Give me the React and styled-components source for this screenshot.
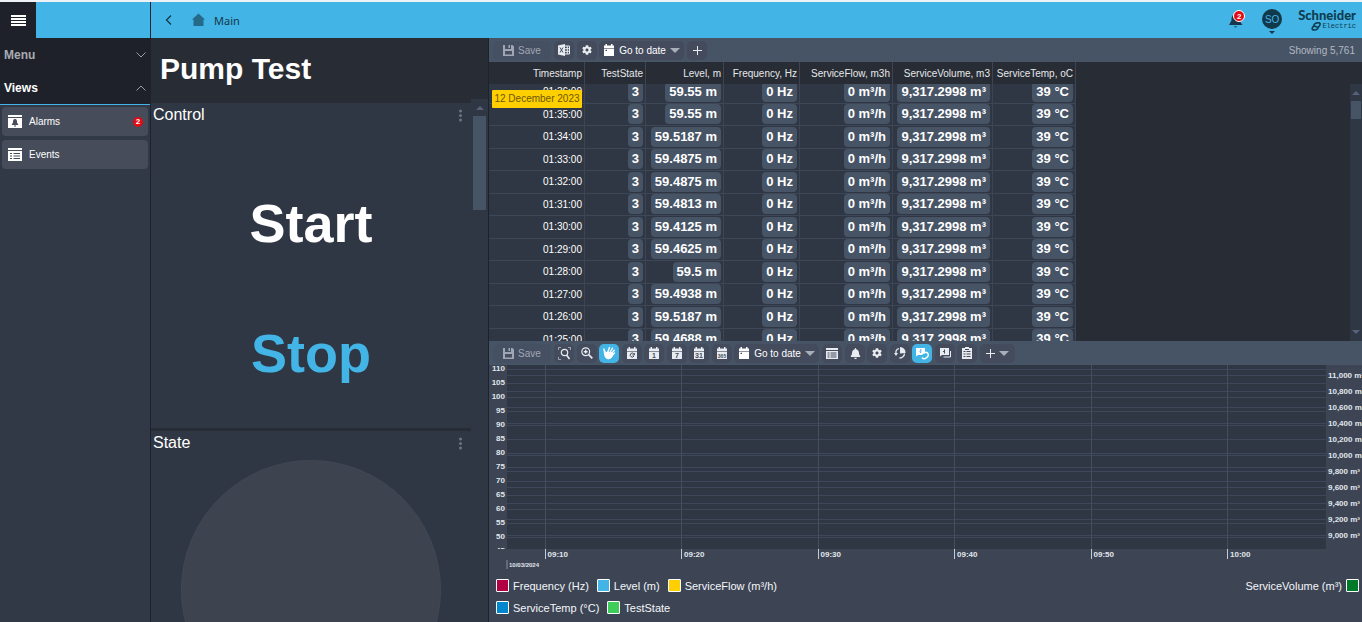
import {useLayoutEffect, useRef} from 'react'
import styled, {createGlobalStyle, css} from 'styled-components'
import {FaBell, FaCog} from 'react-icons/fa'

const GlobalStyle = createGlobalStyle`
  * {
    box-sizing: border-box;
  }

  body {
    margin: 0;
    background: #282c34;
    font-family: 'Liberation Sans', Arial, sans-serif;
    font-size: 10px;
    color: #ffffff;
  }

  button {
    border: 0;
    padding: 0;
    margin: 0;
    background: none;
    color: inherit;
    font: inherit;
    cursor: pointer;
  }

  svg {
    display: block;
    flex: none;
  }
`

// page frame

const Page = styled.div`
  display: grid;
  grid-template-columns: 151px 338px minmax(0, 1fr);
  grid-template-rows: 36px minmax(0, 1fr);
  height: 100vh;
  overflow: hidden;
  border-top: 2px solid #eef2f7;
`

const SideHeader = styled.div`
  background: #42b4e6;
  border-right: 1px solid #1e2530;
`

const MenuButton = styled.button`
  display: flex;
  align-items: center;
  justify-content: center;
  width: 36px;
  height: 36px;
  background: #1e2129;
`

const TopBar = styled.header`
  grid-column: 2 / 4;
  display: flex;
  align-items: center;
  justify-content: space-between;
  padding: 0 6px 0 12px;
  background: #42b4e6;
  color: #16384a;
`

const TopBarGroup = styled.div`
  display: flex;
  align-items: center;
  gap: ${props => props.$gap}px;
`

const HomeLink = styled.a`
  display: flex;
  align-items: center;
  gap: 8px;
  color: inherit;
  font: 11px 'Noto Sans', sans-serif;
  text-decoration: none;
`

const AlertButton = styled.button`
  position: relative;
  width: 20px;
  height: 20px;
`

const Badge = styled.span`
  display: flex;
  align-items: center;
  justify-content: center;
  width: 10px;
  height: 10px;
  border-radius: 50%;
  background: #e00b14;
  color: #ffffff;
  font-size: 8px;
  font-weight: bold;
`

const AlertBadge = styled(Badge)`
  position: absolute;
  top: 0;
  right: 1px;
  width: 12px;
  height: 12px;
  border: 1px solid #ffffff;
`

const UserButton = styled.button`
  display: flex;
  flex-direction: column;
  align-items: center;
  gap: 2px;
  padding-top: 3px;
`

const Avatar = styled.span`
  display: flex;
  align-items: center;
  justify-content: center;
  width: 20px;
  height: 20px;
  border-radius: 50%;
  background: #12394b;
  color: #42b4e6;
`

const Logo = styled.div`
  display: flex;
  flex-direction: column;
  align-items: flex-end;
  color: #0f3d50;
`

const LogoName = styled.span`
  font: 900 13px/13px Lato, sans-serif;
`

const LogoSub = styled.span`
  display: flex;
  gap: 1px;
  font: 7px/8px 'Liberation Mono', monospace;
`

// sidebar

const Sidebar = styled.nav`
  min-height: 0;
  background: #323946;
  border-right: 1px solid #1e222a;
`

const SectionList = styled.div`
  background: #1e2129;
  border-bottom: 1px solid #42b4e6;
`

const SectionButton = styled.button`
  display: flex;
  align-items: center;
  justify-content: space-between;
  width: 100%;
  height: 33px;
  padding: 0 4px;
  color: ${props => (props.$open ? '#ffffff' : '#a9acb2')};
  font-size: 12px;
  font-weight: bold;
`

const ViewList = styled.div`
  display: flex;
  flex-direction: column;
  gap: 4px;
  padding: 2px 2px 0;
`

const ViewButton = styled.button`
  display: flex;
  align-items: center;
  gap: 7px;
  height: 29px;
  padding: 0 5px 0 6px;
  border-radius: 4px;
  background: #464c59;

  ${Badge} {
    margin-left: auto;
  }
`

// pump column

const PumpColumn = styled.main`
  display: flex;
  flex-direction: column;
  min-height: 0;
  background: #303744;
  border-right: 1px solid #1e222a;
`

const PumpTitle = styled.h1`
  margin: 0;
  padding: 0 9px;
  background: #282c34;
  font-size: 30px;
  line-height: 61px;
`

const PumpScroll = styled.div`
  flex: 1;
  display: flex;
  min-height: 0;
`

const PumpPanels = styled.div`
  flex: 1;
  min-width: 0;
  overflow: hidden;
  border-top: 4px solid #282c34;
`

const Panel = styled.section`
  border-bottom: 3px solid #282c34;
`

const PanelHead = styled.div`
  display: flex;
  align-items: center;
  justify-content: space-between;
  height: 24px;
  padding: 0 8px 0 2px;
`

const PanelTitle = styled.h2`
  margin: 0;
  font-size: 16px;
  font-weight: normal;
`

const CommandButton = styled.button`
  display: block;
  width: 100%;
  height: 130px;
  color: ${props => props.$color};
  font-size: 54px;
  font-weight: bold;
`

const CommandList = styled.div`
  padding: 31px 0 10px;
`

const StateLamp = styled.div`
  width: 260px;
  height: 260px;
  margin: 5px auto 0;
  border: 1px solid #414855;
  border-radius: 50%;
  background: #3d434f;
`

const ScrollTrack = styled.div`
  display: flex;
  flex-direction: column;
  align-items: center;
  justify-content: space-between;
  flex: none;
  width: ${props => props.$width}px;
  padding: 7px 0;
  background: #303744;
`

const ScrollThumb = styled.div`
  width: ${props => props.$width}px;
  height: ${props => props.$height}px;
  margin: 6px 0 auto;
  background: #475466;
`

// data column

const DataColumn = styled.div`
  display: flex;
  flex-direction: column;
  min-height: 0;
  min-width: 0;
`

const Toolbar = styled.div`
  display: flex;
  align-items: center;
  gap: 3px;
  height: 24px;
  flex: none;
  padding: 0 7px 0 4px;
  background: #475466;
`

const ToolGroup = styled.div`
  display: flex;
  gap: 2px;
`

const ToolButton = styled.button`
  display: flex;
  align-items: center;
  justify-content: center;
  gap: 4px;
  width: ${props => props.$width || 20}px;
  height: 19px;
  border-radius: 5px;
  background: ${props => (props.$active ? '#42b4e6' : '#434b5c')};
  color: #e8ebf0;

  ${props =>
    props.$wide &&
    css`
      color: #ffffff;
    `}

  &:disabled {
    background: #465063;
    color: #a0a7b3;
    cursor: default;
  }
`

const RecordCount = styled.span`
  margin-left: auto;
  color: #b3b8c1;
`

const TablePane = styled.div`
  position: relative;
  flex: 1;
  display: flex;
  min-height: 0;
`

const TableScroll = styled.div`
  flex: 1;
  min-width: 0;
  overflow: auto;
  scrollbar-width: none;
`

const ScrollColumn = styled.div`
  display: flex;
  padding-top: 22px;
`

const Table = styled.table`
  table-layout: fixed;
  width: 587px;
  height: 292px;
  border-spacing: 0;
`

const HeadCell = styled.th`
  position: sticky;
  top: 0;
  width: ${props => props.$width}px;
  height: 22px;
  padding: 0 2px 0 0;
  border-right: 1px solid #3d4555;
  background: #282c34;
  color: #e6e8eb;
  font-weight: normal;
  text-align: right;
  white-space: nowrap;
`

const Cell = styled.td`
  padding: 0 2px 0 0;
  border-right: 1px solid #3d4555;
  border-bottom: 1px solid #3d4758;
  background: #303744;
  text-align: right;
  white-space: nowrap;
`

const Value = styled.span`
  display: block;
  width: fit-content;
  margin-left: auto;
  padding: 0 4px;
  border-radius: 4px;
  background: #475466;
  font-size: 13px;
  font-weight: bold;
  line-height: 20px;
`

// sits over the first visible rows
const DateTag = styled.div`
  position: absolute;
  top: 28px;
  left: 3px;
  width: 90px;
  border-radius: 1px;
  background: #ffcf00;
  color: #6b5700;
  line-height: 18px;
  text-align: center;
`

// chart

const ChartPane = styled.section`
  flex: none;
  background: #3d4555;
`

const ChartBody = styled.div`
  display: grid;
  grid-template-columns: 18px minmax(0, 1fr) 36px;
  height: 208px;
`

const Axis = styled.div`
  height: 184px;
  padding: ${props => props.$top}px 2px 0;
  overflow: hidden;
  color: #e1e5eb;
  font-size: 8px;
  font-weight: bold;
  line-height: ${props => props.$step}px;
  text-align: ${props => props.$align};
  white-space: nowrap;
`

const AxisLabel = styled.div`
  &:first-child {
    margin-top: ${props => props.$shift || 0}px;
  }
`

const Plot = styled.svg`
  width: 100%;
  height: 208px;
  overflow: visible;
  font-size: 8px;
  font-weight: bold;
`

const Legend = styled.div`
  display: flex;
  justify-content: space-between;
  align-items: flex-start;
  padding: 6px 3px 8px 7px;
`

const LegendSide = styled.div`
  display: flex;
  flex-wrap: wrap;
  gap: 9px 8px;
  width: 40%;
  justify-content: ${props => props.$align || 'flex-start'};
`

const LegendItem = styled.div`
  display: flex;
  align-items: center;
  gap: 4px;
  height: 13px;
  font-size: 11px;
  color: #f4f6f9;
`

const Swatch = styled.span`
  width: 13px;
  height: 13px;
  border: 1px solid #ffffff;
  border-radius: 1px;
  background: ${props => props.$color};
`

const columns = [
  {name: 'Timestamp', width: 96},
  {name: 'TestState', width: 61},
  {name: 'Level, m', width: 78},
  {name: 'Frequency, Hz', width: 76},
  {name: 'ServiceFlow, m3h', width: 93},
  {name: 'ServiceVolume, m3', width: 100},
  {name: 'ServiceTemp, oC', width: 83},
]

const readings = [
  ['01:36:00', '59.55 m'],
  ['01:35:00', '59.55 m'],
  ['01:34:00', '59.5187 m'],
  ['01:33:00', '59.4875 m'],
  ['01:32:00', '59.4875 m'],
  ['01:31:00', '59.4813 m'],
  ['01:30:00', '59.4125 m'],
  ['01:29:00', '59.4625 m'],
  ['01:28:00', '59.5 m'],
  ['01:27:00', '59.4938 m'],
  ['01:26:00', '59.5187 m'],
  ['01:25:00', '59.4688 m'],
]

const leftTicks = [110, 105, 100, 95, 90, 85, 80, 75, 70, 65, 60, 55, 50, 45]
const rightTicks = [11000, 10800, 10600, 10400, 10200, 10000, 9800, 9600, 9400, 9200, 9000]
const times = ['09:10', '09:20', '09:30', '09:40', '09:50', '10:00']

// icons

const Arrow = ({down, size = 8, color = '#56637a'}) => (
  <svg width={size} height={size / 2} viewBox="0 0 8 4">
    <path d={down ? 'M0 0h8L4 4z' : 'M0 4h8L4 0z'} fill={color} />
  </svg>
)

const Chevron = ({up}) => (
  <svg width="10" height="6" viewBox="0 0 10 6" fill="none" stroke="#9a9da4">
    <path d={up ? 'M.5 5.5L5 1l4.500 4.500' : 'M.5.5L5 5 9.500.5'} />
  </svg>
)

const SaveIcon = () => (
  <svg width="11" height="11" viewBox="0 0 11 11" fill="currentColor">
    <path fillRule="evenodd" d="M0 0h2v4h6V0h1.500L11 1.500V11H0zM2 6v3.500h7V6zM5.500 0H7v3H5.500z" />
  </svg>
)

const ExcelIcon = () => (
  <svg width="12" height="12" viewBox="0 0 12 12" fill="none" stroke="currentColor">
    <path d="M0 1.500L7 0v12L0 10.500z" fill="currentColor" stroke="none" />
    <path d="M2 3.500l3 5M5 3.500l-3 5" stroke="#434b5c" />
    <path d="M7 2h4.500v8H7M7 4.700h4.500M7 7.300h4.500M9.300 2v8" />
  </svg>
)

const CalendarIcon = ({label, refresh}) => (
  <svg width="12" height="12" viewBox="0 0 12 12">
    <path d="M1 4V1.500h1.500V0H4v1.500h4V0h1.500v1.500H11V4z" fill="currentColor" />
    <path d="M1 4.600h10V12H1z" fill="currentColor" />
    {label && (
      <text x="6" y="10.500" textAnchor="middle" fontSize={label.length > 2 ? 5 : 7} fontWeight="bold" fill="#434b5c">
        {label}
      </text>
    )}
    {refresh && <path d="M7.800 6.800A2 2 0 1 0 8 9M8.300 6v2H6.300" fill="none" stroke="#434b5c" />}
    {!label && !refresh && <path d="M2.500 5.800H4v1.300H2.500z" fill="#434b5c" />}
  </svg>
)

const PlusIcon = () => (
  <svg width="9" height="9" viewBox="0 0 9 9" stroke="currentColor">
    <path d="M4.500 0v9M0 4.500h9" />
  </svg>
)

const ZoomAreaIcon = () => (
  <svg width="13" height="13" viewBox="0 0 13 13" fill="none" stroke="currentColor">
    <path d="M.5 3V.5H3M10 .5h2.500V3M.5 10v2.500H3" strokeWidth=".8" opacity=".7" />
    <circle cx="6.500" cy="5.500" r="3.200" strokeWidth="1.200" />
    <path d="M8.500 8l3 4" strokeWidth="1.500" />
  </svg>
)

const ZoomInIcon = () => (
  <svg width="12" height="12" viewBox="0 0 12 12" fill="none" stroke="currentColor">
    <circle cx="4.700" cy="4.700" r="3.900" strokeWidth="1.200" />
    <path d="M7.700 7.700l3.600 3.600" strokeWidth="1.700" />
    <path d="M2.800 4.700h3.800M4.700 2.800v3.800" strokeWidth="1.400" />
  </svg>
)

const HandIcon = () => (
  <svg width="14" height="14" viewBox="0 0 14 14" fill="none" stroke="#ffffff" strokeLinecap="round">
    <path d="M2 3l1.500 3.500L6 6l4.500 1L11 9l-2 3-3 1-2.500-1.500L2.500 8z" fill="#ffffff" />
    <path d="M5.500 7L7.500 1.500M7 8l3.500-5.800M8 9l4.300-4.700M9 10.500l3.500-3.500" strokeWidth="1.400" />
  </svg>
)

const TableIcon = () => (
  <svg width="12" height="11" viewBox="0 0 12 11" fill="currentColor">
    <path fillRule="evenodd" d="M0 0h12v2H0zM0 3h12v8H0zM1.500 4.500v1h2v-1zM4.500 4.500v1h6v-1zM1.500 6.500v1h2v-1zM4.500 6.500v1h6v-1zM1.500 8.500v1h2v-1zM4.500 8.500v1h6v-1z" />
  </svg>
)

const RotateIcon = () => (
  <svg width="12" height="12" viewBox="0 0 12 12" fill="none" stroke="currentColor">
    <path d="M2 6.500A4.400 4.400 0 0 1 5 1.500M5.500 11a4.700 4.700 0 0 0 5-4.500" strokeWidth="1.300" />
    <path d="M6 0v6.500L11.500 6A5.500 5.500 0 0 0 6 0zM0 6h4L2 9z" fill="currentColor" stroke="none" />
  </svg>
)

const LinkedNoteIcon = () => (
  <svg width="14" height="13" viewBox="0 0 14 13" fill="none" stroke="#ffffff">
    <path d="M1 1h9v4L7 8H3L1 9.500z" fill="#ffffff" stroke="none" />
    <path d="M5.800 2v3.500M4.500 4.500l1.300 1.300" stroke="#42b4e6" />
    <path d="M8.500 6.500l1.500-1a2.500 2.500 0 0 1 2.500 4.200L11 11a2.500 2.500 0 0 1-4-.5" strokeWidth="1.500" />
  </svg>
)

const NotesIcon = () => (
  <svg width="13" height="11" viewBox="0 0 13 11">
    <path d="M1 0h9v7H3L1 8.500z" fill="currentColor" />
    <path d="M5.500 1.500v4M4 3.500h1.500" stroke="#434b5c" fill="none" />
    <path d="M11.500 3v6H4.500" stroke="currentColor" fill="none" />
  </svg>
)

const ClipboardIcon = () => (
  <svg width="10" height="12" viewBox="0 0 10 12">
    <path d="M0 1h3V0h4v1h3v11H0z" fill="currentColor" />
    <path d="M1.500 4.500h2M4.500 4.500h4M1.500 7h2M4.500 7h4M1.500 9.500h2M4.500 9.500h4M3 2.500h4" stroke="#434b5c" />
  </svg>
)

const AlarmViewIcon = () => (
  <svg width="14" height="13" viewBox="0 0 14 13">
    <path d="M0 0h14v2H0zM0 3h14v10H0z" fill="#ffffff" />
    <path d="M7 4c2 0 2 2 2 3.500L10.500 10h-7L5 7.500C5 6 5 4 7 4zM6 10.500h2v1H6z" fill="#464c59" />
  </svg>
)

const EventViewIcon = () => (
  <svg width="14" height="13" viewBox="0 0 14 13">
    <path d="M0 0h14v2H0zM0 3h14v10H0z" fill="#ffffff" />
    <path d="M2 5.500h2M5.500 5.500H12M2 8h2M5.500 8H12M2 10.500h2M5.500 10.500H12" stroke="#464c59" />
  </svg>
)

const DotsIcon = () => (
  <svg width="5" height="13" viewBox="0 0 5 13" fill="#6d7480">
    <circle cx="2.500" cy="2" r="1.500" />
    <circle cx="2.500" cy="6.500" r="1.500" />
    <circle cx="2.500" cy="11" r="1.500" />
  </svg>
)

const GoToDate = () => (
  <ToolButton $width={85} $wide>
    <CalendarIcon />
    Go to date
    <Arrow down size={10} color="#a9afb9" />
  </ToolButton>
)

const SaveButton = () => (
  <ToolButton $width={58} disabled>
    <SaveIcon />
    Save
  </ToolButton>
)

const PanelTop = ({title}) => (
  <PanelHead>
    <PanelTitle>{title}</PanelTitle>
    <button aria-label={`${title} options`}>
      <DotsIcon />
    </button>
  </PanelHead>
)

const DataTable = () => {
  const scroller = useRef(null)

  // the list is left slightly scrolled under its header
  useLayoutEffect(() => {
    scroller.current.scrollTop = 3
  }, [])

  return (
    <TablePane>
      <TableScroll ref={scroller}>
        <Table>
          <thead>
            <tr>
              {columns.map(column => (
                <HeadCell key={column.name} $width={column.width}>
                  {column.name}
                </HeadCell>
              ))}
            </tr>
          </thead>
          <tbody>
            {readings.map(([time, level]) => (
              <tr key={time}>
                <Cell>{time}</Cell>
                {['3', level, '0 Hz', '0 m³/h', '9,317.2998 m³', '39 °C'].map((value, i) => (
                  <Cell key={i}>
                    <Value>{value}</Value>
                  </Cell>
                ))}
              </tr>
            ))}
          </tbody>
        </Table>
      </TableScroll>
      <DateTag>12 December 2023</DateTag>
      <ScrollColumn>
        <ScrollTrack $width={12}>
          <Arrow />
          <ScrollThumb $width={10} $height={18} />
          <Arrow down />
        </ScrollTrack>
      </ScrollColumn>
    </TablePane>
  )
}

const Chart = () => (
  <ChartBody>
    <Axis $top={0} $step={14} $align="right">
      {leftTicks.map(tick => (
        <AxisLabel key={tick} $shift={-3}>{tick}</AxisLabel>
      ))}
    </Axis>
    <Plot>
      <rect width="100%" height="184" fill="#303744" />
      <g stroke="#3d485b" shapeRendering="crispEdges">
        {leftTicks.slice(0, 13).map((tick, i) => (
          <line key={tick} x1="0" x2="100%" y1={4.5 + i * 14} y2={4.5 + i * 14} />
        ))}
        {rightTicks.map((tick, i) => (
          <line key={tick} x1="0" x2="100%" y1={10.5 + i * 16} y2={10.5 + i * 16} />
        ))}
      </g>
      {times.map((time, i) => {
        const x = `${4.7 + (i * 100) / 6}%`
        return (
          <g key={time}>
            <line x1={x} x2={x} y1="0" y2="184" stroke="#434e61" shapeRendering="crispEdges" />
            <line x1={x} x2={x} y1="184" y2="194" stroke="#c5cad3" shapeRendering="crispEdges" />
            <text x={x} dx="2" y="192" fill="#e1e5eb">{time}</text>
          </g>
        )
      })}
      <line x1="0" x2="0" y1="195" y2="204" stroke="#8a93a2" />
      <text x="2" y="202" fontSize="6" fill="#e1e5eb">10/03/2024</text>
    </Plot>
    <Axis $top={3} $step={16} $align="left">
      {rightTicks.map(tick => (
        <AxisLabel key={tick}>{tick.toLocaleString('en-US')} m³</AxisLabel>
      ))}
    </Axis>
  </ChartBody>
)

const Series = ({name, color, reverse}) => (
  <LegendItem>
    {reverse && name}
    <Swatch $color={color} />
    {!reverse && name}
  </LegendItem>
)

const App = () => (
  <Page>
    <GlobalStyle />
    <SideHeader>
      <MenuButton aria-label="Toggle menu">
        <svg width="15" height="11" viewBox="0 0 15 11" fill="#ffffff">
          <path d="M0 0h15v2H0zM0 3h15v2H0zM0 6h15v2H0zM0 9h15v2H0z" />
        </svg>
      </MenuButton>
    </SideHeader>
    <TopBar>
      <TopBarGroup $gap={16}>
        <button aria-label="Back">
          <svg width="12" height="10" viewBox="0 0 12 10" fill="none" stroke="currentColor" strokeWidth="1.300">
            <path d="M8 .5L3.500 5 8 9.500" />
          </svg>
        </button>
        <HomeLink href="#main">
          <svg width="15" height="14" viewBox="0 0 15 14" fill="#266a8a">
            <path d="M7.500.5L1 6.500h1.500V13h10V6.500H14z" />
          </svg>
          Main
        </HomeLink>
      </TopBarGroup>
      <TopBarGroup $gap={16}>
        <AlertButton aria-label="Notifications">
          <svg width="20" height="20" viewBox="0 0 20 20" fill="currentColor">
            <path d="M9 4.500c3.500 0 4.500 3 4.500 6l3 4.500H3L5.500 10.500c0-3 .5-6 3.500-6z" />
            <path d="M7.500 16h4l-2 2z" opacity=".6" />
          </svg>
          <AlertBadge>2</AlertBadge>
        </AlertButton>
        <UserButton>
          <Avatar>SO</Avatar>
          <Arrow down size={6} color="#12394b" />
        </UserButton>
        <Logo>
          <LogoName>Schneider</LogoName>
          <LogoSub>
            <svg width="10" height="9" viewBox="0 0 10 9" fill="none" stroke="currentColor" strokeWidth="1.600">
              <path d="M9 1C6 0 2.500 2 3 3.500S7 4.500 7 6 3 8.500 1.500 7.500C.5 6.500 2 4.500 3.500 3.500M7 5.500C8.500 4.500 9.500 3 9 1" />
            </svg>
            Electric
          </LogoSub>
        </Logo>
      </TopBarGroup>
    </TopBar>

    <Sidebar>
      <SectionList>
        <SectionButton>
          Menu
          <Chevron />
        </SectionButton>
        <SectionButton $open>
          Views
          <Chevron up />
        </SectionButton>
      </SectionList>
      <ViewList>
        <ViewButton>
          <AlarmViewIcon />
          Alarms
          <Badge>2</Badge>
        </ViewButton>
        <ViewButton>
          <EventViewIcon />
          Events
        </ViewButton>
      </ViewList>
    </Sidebar>

    <PumpColumn>
      <PumpTitle>Pump Test</PumpTitle>
      <PumpScroll>
        <PumpPanels>
          <Panel>
            <PanelTop title="Control" />
            <CommandList>
              <CommandButton $color="#ffffff">Start</CommandButton>
              <CommandButton $color="#42b4e6">Stop</CommandButton>
            </CommandList>
          </Panel>
          <Panel>
            <PanelTop title="State" />
            <StateLamp />
          </Panel>
        </PumpPanels>
        <ScrollTrack $width={17}>
          <Arrow />
          <ScrollThumb $width={13} $height={94} />
        </ScrollTrack>
      </PumpScroll>
    </PumpColumn>

    <DataColumn>
      <Toolbar>
        <SaveButton />
        <ToolButton aria-label="Export to Excel"><ExcelIcon /></ToolButton>
        <ToolGroup>
          <ToolButton aria-label="Settings"><FaCog size={10} /></ToolButton>
          <GoToDate />
        </ToolGroup>
        <ToolButton aria-label="Add"><PlusIcon /></ToolButton>
        <RecordCount>Showing 5,761</RecordCount>
      </Toolbar>
      <DataTable />
      <ChartPane>
        <Toolbar>
          <SaveButton />
          <ToolButton aria-label="Zoom to area"><ZoomAreaIcon /></ToolButton>
          <ToolGroup>
            <ToolButton aria-label="Zoom in"><ZoomInIcon /></ToolButton>
            <ToolButton aria-label="Pan" $active><HandIcon /></ToolButton>
          </ToolGroup>
          <ToolGroup>
            <ToolButton aria-label="Now"><CalendarIcon refresh /></ToolButton>
            <ToolButton aria-label="One day"><CalendarIcon label="1" /></ToolButton>
          </ToolGroup>
          <ToolGroup>
            <ToolButton aria-label="One week"><CalendarIcon label="7" /></ToolButton>
            <ToolButton aria-label="One month"><CalendarIcon label="31" /></ToolButton>
          </ToolGroup>
          <ToolGroup>
            <ToolButton aria-label="One year"><CalendarIcon label="365" /></ToolButton>
            <GoToDate />
          </ToolGroup>
          <ToolButton aria-label="Table"><TableIcon /></ToolButton>
          <ToolGroup>
            <ToolButton aria-label="Alarms"><FaBell size={11} /></ToolButton>
            <ToolButton aria-label="Settings"><FaCog size={10} /></ToolButton>
          </ToolGroup>
          <ToolGroup>
            <ToolButton aria-label="Refresh"><RotateIcon /></ToolButton>
            <ToolButton aria-label="Link notes" $active><LinkedNoteIcon /></ToolButton>
          </ToolGroup>
          <ToolGroup>
            <ToolButton aria-label="Notes"><NotesIcon /></ToolButton>
            <ToolButton aria-label="Report"><ClipboardIcon /></ToolButton>
          </ToolGroup>
          <ToolButton aria-label="Add series" $width={35}>
            <PlusIcon />
            <Arrow down size={10} color="#a9afb9" />
          </ToolButton>
        </Toolbar>
        <Chart />
        <Legend>
          <LegendSide>
            <Series name="Frequency (Hz)" color="#b10043" />
            <Series name="Level (m)" color="#42b4e6" />
            <Series name="ServiceFlow (m³/h)" color="#ffcf00" />
            <Series name="ServiceTemp (°C)" color="#0087cd" />
            <Series name="TestState" color="#3dcd58" />
          </LegendSide>
          <LegendSide $align="flex-end">
            <Series name="ServiceVolume (m³)" color="#007a29" reverse />
          </LegendSide>
        </Legend>
      </ChartPane>
    </DataColumn>
  </Page>
)

export default App
